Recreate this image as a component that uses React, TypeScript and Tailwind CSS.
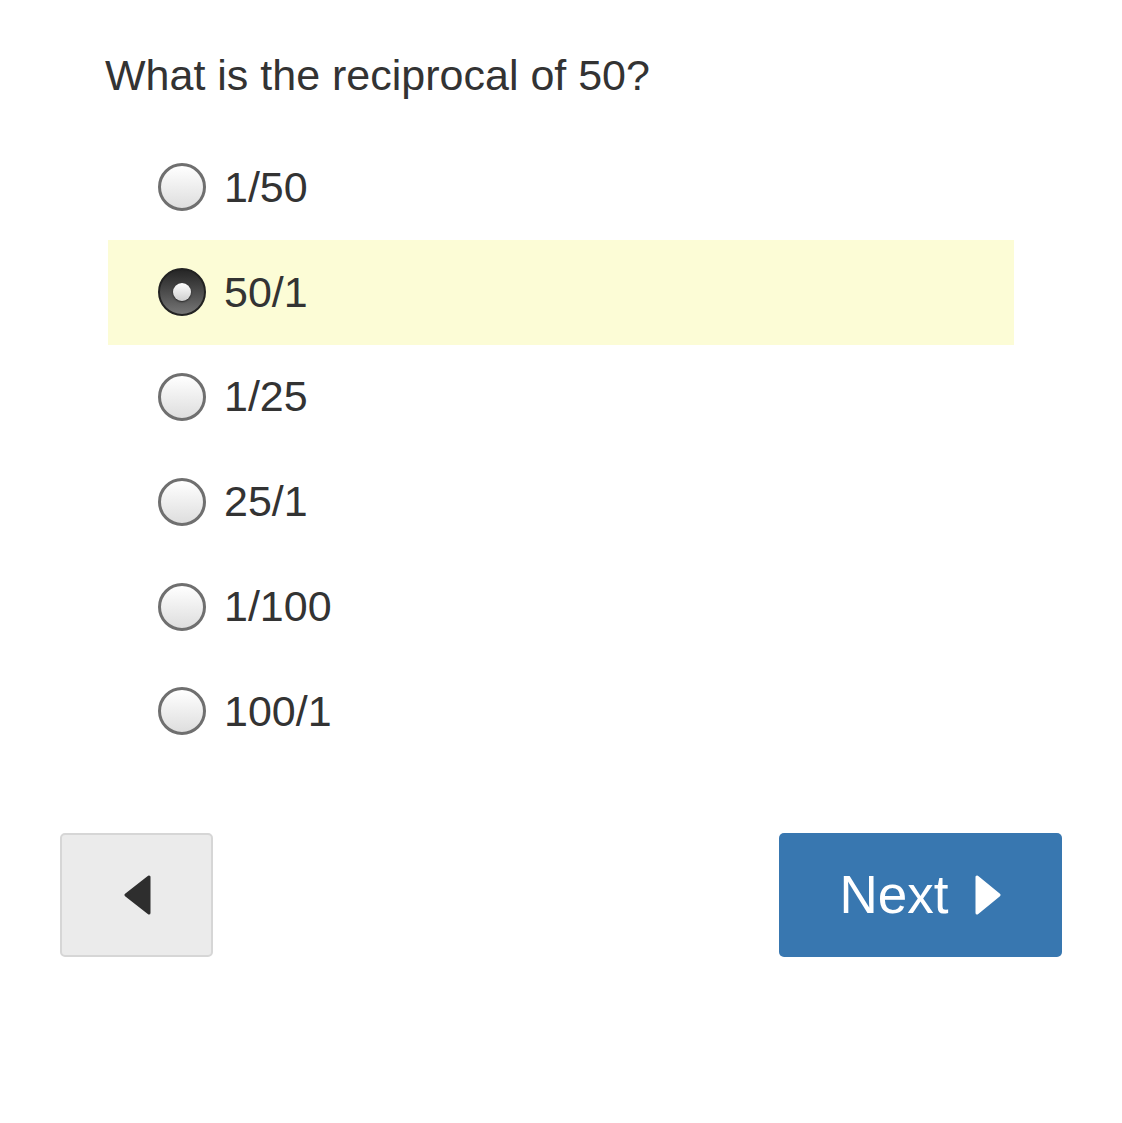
import { useState } from 'react'

const options = ['1/50', '50/1', '1/25', '25/1', '1/100', '100/1']

function Radio({ checked }: { checked: boolean }) {
  if (checked) {
    return (
      <span className="flex items-center justify-center w-[48px] h-[48px] rounded-full bg-gradient-to-b from-[#262626] to-[#767676] border-[2px] border-[#222222] shrink-0">
        <span className="w-[18px] h-[18px] rounded-full bg-gradient-to-b from-[#ffffff] to-[#cfcfcf] shadow-[0_1px_2px_rgba(0,0,0,0.6)]" />
      </span>
    )
  }
  return (
    <span className="w-[48px] h-[48px] rounded-full border-[3px] border-[#6f6f6f] bg-gradient-to-b from-[#ffffff] to-[#dedede] shrink-0" />
  )
}

export default function App() {
  const [selected, setSelected] = useState(1)

  return (
    <div className="w-[1122px] h-[1123px] bg-white text-[#333333] font-['Liberation_Sans',Arial,sans-serif]">
      {/* Question */}
      <div className="pt-[50px] pl-[105px] text-[43px] leading-[50px]">What is the reciprocal of 50?</div>

      {/* Choices */}
      <div className="mt-[35px] ml-[108px] w-[906px]">
        {options.map((opt, i) => (
          <div
            key={opt}
            onClick={() => setSelected(i)}
            className={`flex items-center h-[104.8px] pl-[50px] gap-[18px] cursor-pointer ${
              selected === i ? 'bg-[#fcfcd6]' : ''
            }`}
          >
            <Radio checked={selected === i} />
            <span className="text-[43px] leading-none">{opt}</span>
          </div>
        ))}
      </div>

      {/* Nav buttons */}
      <div className="mt-[69px] px-[60px] flex justify-between">
        <button className="flex items-center justify-center w-[153px] h-[124px] rounded-[5px] bg-[#ebebeb] border-[2px] border-[#d6d6d6]">
          <svg width="28" height="40" viewBox="0 0 28 40">
            <path d="M26 2 L26 38 L3 20 Z" fill="#2e2e2e" stroke="#2e2e2e" strokeWidth="3" strokeLinejoin="round" />
          </svg>
        </button>
        <button className="flex items-center justify-center gap-[27px] w-[283px] h-[124px] rounded-[5px] bg-[#3877b0] text-white">
          <span className="text-[53px] leading-none">Next</span>
          <svg width="26" height="40" viewBox="0 0 26 40">
            <path d="M2 2 L2 38 L24 20 Z" fill="#ffffff" stroke="#ffffff" strokeWidth="3" strokeLinejoin="round" />
          </svg>
        </button>
      </div>
    </div>
  )
}
